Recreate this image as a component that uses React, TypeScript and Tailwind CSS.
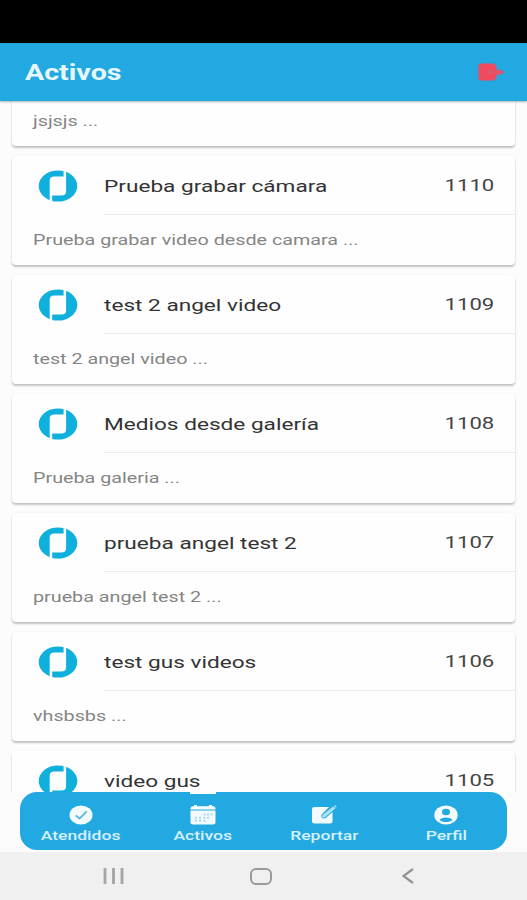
const items = [
  { title: '', id: '', text: 'jsjsjs ...' },
  { title: 'Prueba grabar cámara', id: '1110', text: 'Prueba grabar video desde camara ...' },
  { title: 'test 2 angel video', id: '1109', text: 'test 2 angel video ...' },
  { title: 'Medios desde galería', id: '1108', text: 'Prueba galeria ...' },
  { title: 'prueba angel test 2', id: '1107', text: 'prueba angel test 2 ...' },
  { title: 'test gus videos', id: '1106', text: 'vhsbsbs ...' },
  { title: 'video gus', id: '1105', text: '' },
];

function Logo() {
  return (
    <svg viewBox="0 0 40 32" className="h-8 w-10 shrink-0">
      <ellipse cx="20" cy="16" rx="19.3" ry="15.6" fill="#0fb0dc" />
      <path d="M25.6 0 V6.4 H16.4 Q11.7 6.4 11.7 10.5 V32 H14.2 V25.6 H23.4 Q28.1 25.6 28.1 21.5 V0 Z" fill="#fdfdfd" />
    </svg>
  );
}

function Card({ title, id, text }: { title: string; id: string; text: string }) {
  return (
    <article className="h-[109px] shrink-0 rounded-[4px] bg-[#fefefe] shadow-[0_2px_2px_rgba(0,0,0,0.22),0_0_2px_rgba(0,0,0,0.07)]">
      <div className="flex h-[59px] items-center pl-[26px]">
        <Logo />
        <div className="ml-[26px] flex h-full flex-1 items-center justify-between border-b border-[#ededed] pt-[3px] pr-[21px]">
          {title && <span className="origin-left scale-x-[1.33] whitespace-nowrap text-[17px] text-[#333]">{title}</span>}
          {id && <span className="mb-0.5 origin-right scale-x-[1.3] text-[17px] text-[#444]">{id}</span>}
        </div>
      </div>
      {text && (
        <p className="mt-[13px] ml-[21px] w-max origin-left scale-x-[1.315] whitespace-nowrap text-[15px] leading-6 text-[#858585]">{text}</p>
      )}
    </article>
  );
}

function CheckIcon() {
  return (
    <svg viewBox="0 0 24 20" className="h-5 w-6">
      <ellipse cx="12" cy="10" rx="11.5" ry="9.5" fill="#f4fbff" />
      <path d="M6.8 10.3 L10.5 13.6 L17.7 6.3" fill="none" stroke="#4fb5df" strokeWidth="1.7" />
    </svg>
  );
}

function CalendarIcon() {
  return (
    <svg viewBox="0 0 26 20" className="h-5 w-[26px]">
      <path d="M3 1.2 H4 V0 H7 V1.2 H19 V0 H22 V1.2 H23 Q25.5 1.2 25.5 3.4 V4.4 H.5 V3.4 Q.5 1.2 3 1.2 Z" fill="#f4fbff" />
      <path d="M.5 5.4 H25.5 V17.3 Q25.5 19.5 23 19.5 H3 Q.5 19.5 .5 17.3 Z" fill="#f4fbff" />
      <g fill="#a5d9ef">
        <rect x="13.5" y="8.5" width="2" height="2" />
        <rect x="17" y="8.5" width="2" height="2" />
        <rect x="20.5" y="8.5" width="2" height="2" />
        <rect x="5" y="11.7" width="2" height="2" />
        <rect x="9" y="11.7" width="2" height="2" />
        <rect x="13.5" y="11.7" width="2" height="2" />
        <rect x="17" y="11.7" width="2" height="2" />
        <rect x="5" y="14.7" width="2" height="2" />
        <rect x="9" y="14.7" width="2" height="2" />
        <rect x="13.5" y="14.7" width="2" height="2" />
      </g>
    </svg>
  );
}

function EditIcon() {
  return (
    <svg viewBox="0 0 26 20" className="h-5 w-[26px]">
      <path d="M3.5 2 H18 L10.5 9.8 V13.2 H14.5 L21.5 7 V16.6 Q21.5 18.6 19 18.6 H3.5 Q1 18.6 1 16.6 V4 Q1 2 3.5 2 Z" fill="#f4fbff" />
      <path d="M10.8 13 L11.8 9.8 L22 1.5 L24.5 3.3 L14.4 12 Z" fill="#a9e2ee" />
      <path d="M23 .9 L24 .1 L25.8 1.6 L24.9 2.7 Z" fill="#a9e2ee" />
    </svg>
  );
}

function UserIcon() {
  return (
    <svg viewBox="0 0 24 20" className="h-5 w-6">
      <ellipse cx="12" cy="10" rx="11.7" ry="9.6" fill="#f4fbff" />
      <ellipse cx="12" cy="7" rx="4" ry="3.2" fill="#22a9e2" />
      <path d="M5.5 15 C7 11.5 17 11.5 18.5 15 C15 17.7 9 17.7 5.5 15 Z" fill="#22a9e2" />
    </svg>
  );
}

const tabs = [
  { label: 'Atendidos', Icon: CheckIcon, active: false },
  { label: 'Activos', Icon: CalendarIcon, active: true },
  { label: 'Reportar', Icon: EditIcon, active: false },
  { label: 'Perfil', Icon: UserIcon, active: false },
];

export default function App() {
  return (
    <div className="flex h-[900px] w-[527px] flex-col overflow-hidden bg-[#fcfcfc] font-[Roboto,sans-serif]">
      <div className="h-[43px] shrink-0 bg-black" />
      <header className="z-10 flex h-[58px] shrink-0 items-center justify-between bg-[#22a9e2] pr-[21px] pl-[25px] shadow-[0_1px_2px_rgba(0,0,0,0.3)]">
        <h1 className="origin-left scale-x-[1.3] text-[22px] font-bold text-[#e6f7ff]">Activos</h1>
        <svg viewBox="0 0 30 20" className="h-5 w-[30px]">
          <path d="M5 1.5 H17.5 L20.5 4 V7.5 L25 8 L28.5 10 L25 12.5 L20.5 13 V16 L17.5 18.5 H5 Q2.5 18.5 2.5 16 V4 Q2.5 1.5 5 1.5 Z" fill="#ef4b5f" />
          <path d="M11 10 H19 M20.5 8.2 L24 10 L20.5 12.2" fill="none" stroke="#c76583" strokeWidth="1.6" />
        </svg>
      </header>
      <main className="h-[691px] shrink-0 overflow-hidden px-3">
        <div className="-mt-[64px] flex flex-col gap-[10px]">
          {items.map((item) => (
            <Card key={item.text + item.id} {...item} />
          ))}
        </div>
      </main>
      <nav className="mr-5 ml-5 grid h-[58px] shrink-0 grid-cols-4 rounded-[17px] bg-[#22a9e2]">
        {tabs.map(({ label, Icon, active }) => (
          <div key={label} className="flex flex-col items-center">
            <div className={active ? 'h-0.5 w-[26px] bg-white' : 'h-0.5 w-[26px]'} />
            <div className="mt-[11px]">
              <Icon />
            </div>
            <span className="mt-[2px] scale-x-[1.35] text-[13px] leading-[18px] font-medium text-[#d5f0fc]">{label}</span>
          </div>
        ))}
      </nav>
      <footer className="mt-0.5 flex flex-1 items-center bg-[#f0f0f0] pl-[103px]">
        <svg viewBox="0 0 22 16" className="h-4 w-[22px]">
          <path d="M2 0 V16 M10.5 0 V16 M19 0 V16" stroke="#a4a4a4" strokeWidth="2.8" />
        </svg>
        <div className="ml-[125px] h-[17px] w-[22px] rounded-[6px] border-2 border-[#999]" />
        <svg viewBox="0 0 12 16" className="ml-[130px] h-4 w-3">
          <path d="M11 1 L1.5 8 L11 15" fill="none" stroke="#949494" strokeWidth="2.3" />
        </svg>
      </footer>
    </div>
  );
}
